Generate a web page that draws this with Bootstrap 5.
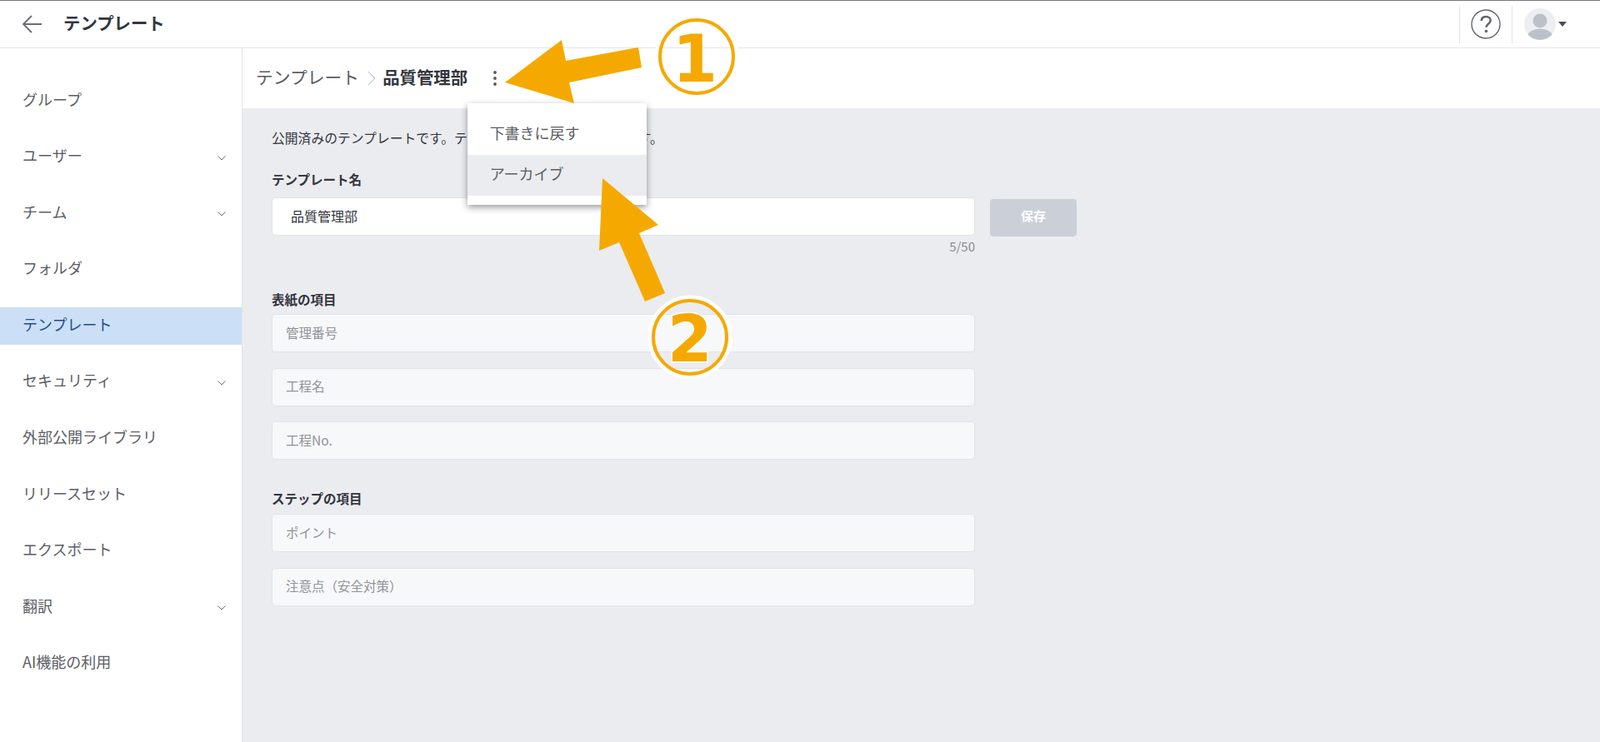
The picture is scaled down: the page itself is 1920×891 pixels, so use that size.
<!DOCTYPE html>
<html lang="ja">
<head>
    <meta charset="UTF-8">
    <title>テンプレート</title>
    <link href="https://cdn.jsdelivr.net/npm/bootstrap@5.3.0/dist/css/bootstrap.min.css" rel="stylesheet">
    <style>
        body {
            height: 891px;
            overflow: hidden;
            position: relative;
            background-color: #ebecf0;
            color: #33363d;
            font-family: "Noto Sans CJK JP", "Noto Sans", sans-serif;
        }

        .top-bar {
            height: 58px;
            background: #fff;
            border-top: 1px solid #77797d;
            border-bottom: 1px solid #e3e4e8;
            padding: 0 0 0 26px;
        }

        .top-title {
            font-size: 20.4px;
            font-weight: 700;
            margin-left: 26px;
            padding-bottom: 3px;
        }

        .top-cell {
            height: 45px;
            border-left: 1px solid #e3e4e8;
        }

        .help-cell { width: 63px; }
        .user-cell { width: 106px; padding-left: 14px; gap: 3px; }

        .side-menu {
            width: 291px;
            height: 833px;
            background: #fff;
            border-right: 1px solid #e3e4e8;
            padding-top: 40.5px;
            gap: 22.6px;
        }

        .side-item {
            height: 45px;
            padding: 0 19px 4px 27px;
            font-size: 18px;
            color: #5a5d64;
        }

        .side-item svg { margin-top: 6px; }

        .side-item.is-current {
            background: #cbe0f6;
            color: #1f4e86;
        }

        .crumb-bar {
            height: 72px;
            background: #fff;
            padding-left: 16px;
            font-size: 20.4px;
        }

        .crumb-link { color: #5a5d64; font-size: 20.8px; padding-bottom: 3px; }
        .crumb-sep { margin: 0 8px 0 10px; }
        .crumb-now { font-weight: 700; padding-bottom: 3px; }
        .kebab-wrap { position: relative; margin-left: 30.5px; height: 18px; }

        .menu-box {
            position: absolute;
            top: 0;
            left: -31px;
            margin-top: 39px !important;
            width: 215px;
            height: 122px;
            padding: 13px 0 11px;
            border: 0;
            border-radius: 0;
            box-shadow: 0 3px 8px rgba(0, 0, 0, .4);
            font-size: 18px;
        }

        .menu-box .dropdown-item {
            height: 49px;
            padding: 0 0 5px 27px;
            display: flex;
            align-items: center;
            color: #5a5d64;
        }

        .menu-box .dropdown-item.is-hover { background: #ebecf0; }

        .form-area { padding: 24px 0 0 35px; width: 1010px; }
        .hint-line { margin: 0 0 25px; line-height: 24px; font-size: 15.8px; white-space: nowrap; }
        .field-label { font-weight: 700; font-size: 15.5px; line-height: 24px; margin-bottom: 6px; display: block; }
        .field-label.name-label { margin-bottom: 10px; }

        .form-control.name-input,
        .form-control.item-input {
            width: 844px;
            height: 46px;
            padding: 0 22px 3px;
            border: 1px solid #e1e3e7;
            border-radius: 4px;
            font-size: 16px;
            color: #33363d;
        }

        .form-control.item-input { background: #f7f8fa; margin-bottom: 18.6px; padding-left: 16px; font-size: 15.5px; }
        .form-control.item-input::placeholder { color: #8f9299; opacity: 1; }
        .form-control.item-input:last-child { margin-bottom: 0; }

        .btn.save-btn:disabled {
            width: 104px;
            height: 45px;
            margin-left: 18px;
            margin-top: 2px;
            padding: 0 0 4px;
            border: 0;
            border-radius: 4px;
            background: #cbcfd8;
            color: #fff;
            opacity: 1;
            font-size: 15px;
            font-weight: 700;
        }

        .count-text { width: 844px; text-align: right; font-size: 15px; line-height: 16px; color: #8a8d93; margin-top: 4px; }
        .group-one { margin-top: 43px; }
        .group-two { margin-top: 34px; }
        .group-two .field-label { margin-bottom: 7px; }

        .mark-layer { position: absolute; left: 0; top: 0; z-index: 1100; pointer-events: none; }
        .mark-num {
            font-family: "DejaVu Sans", sans-serif;
            font-weight: 700;
            font-size: 78px;
            fill: #f5a900;
            stroke: #fff;
            stroke-width: 3px;
            paint-order: stroke;
            text-anchor: middle;
        }
    </style>
</head>

<body>
    <header class="top-bar d-flex align-items-center">
        <svg width="24" height="22" viewBox="0 0 24 22" fill="none" stroke="#6b6e75" stroke-width="1.8"><path d="M24 11H2M12 1 2 11l10 10"/></svg>
        <div class="top-title">テンプレート</div>
        <div class="d-flex ms-auto">
            <div class="top-cell help-cell d-flex align-items-center justify-content-center">
                <svg width="36" height="36" viewBox="0 0 36 36"><circle cx="18" cy="18" r="17" fill="none" stroke="#63666d" stroke-width="1.4"/><path d="M12.7 14c.2-3.2 2.400-5 5.500-5 3.200 0 5.400 1.900 5.400 4.600 0 4-5.200 4.200-5.200 8.200" fill="none" stroke="#63666d" stroke-width="2.600"/><circle cx="18.400" cy="26.500" r="1.800" fill="#63666d"/></svg>
            </div>
            <div class="top-cell user-cell d-flex align-items-center">
                <svg width="38" height="38" viewBox="0 0 38 38"><defs><clipPath id="avatarClip"><circle cx="19" cy="19" r="19"/></clipPath></defs><circle cx="19" cy="19" r="19" fill="#eceef2"/><g clip-path="url(#avatarClip)" fill="#bcc0c8"><circle cx="19" cy="15" r="8.500"/><ellipse cx="19" cy="34" rx="15" ry="9.500"/></g></svg>
                <svg width="10" height="6" viewBox="0 0 10 6"><path d="M0 0h10L5 6z" fill="#4a4d57"/></svg>
            </div>
        </div>
    </header>

    <div class="d-flex">
        <nav class="side-menu nav flex-column flex-nowrap">
            <div class="side-item d-flex align-items-center">グループ</div>
            <div class="side-item d-flex align-items-center justify-content-between">ユーザー<svg width="10" height="6" viewBox="0 0 10 6" fill="none" stroke="#6b6e75"><path d="M.5.500 5 5 9.500.500"/></svg></div>
            <div class="side-item d-flex align-items-center justify-content-between">チーム<svg width="10" height="6" viewBox="0 0 10 6" fill="none" stroke="#6b6e75"><path d="M.5.500 5 5 9.500.500"/></svg></div>
            <div class="side-item d-flex align-items-center">フォルダ</div>
            <div class="side-item is-current d-flex align-items-center">テンプレート</div>
            <div class="side-item d-flex align-items-center justify-content-between">セキュリティ<svg width="10" height="6" viewBox="0 0 10 6" fill="none" stroke="#6b6e75"><path d="M.5.500 5 5 9.500.500"/></svg></div>
            <div class="side-item d-flex align-items-center">外部公開ライブラリ</div>
            <div class="side-item d-flex align-items-center">リリースセット</div>
            <div class="side-item d-flex align-items-center">エクスポート</div>
            <div class="side-item d-flex align-items-center justify-content-between">翻訳<svg width="10" height="6" viewBox="0 0 10 6" fill="none" stroke="#6b6e75"><path d="M.5.500 5 5 9.500.500"/></svg></div>
            <div class="side-item d-flex align-items-center">AI機能の利用</div>
        </nav>

        <main class="flex-grow-1">
            <div class="crumb-bar d-flex align-items-center">
                <span class="crumb-link">テンプレート</span>
                <svg class="crumb-sep" width="10" height="18" viewBox="0 0 10 18" fill="none" stroke="#b5b7bc"><path d="m1 1 8 8-8 8"/></svg>
                <span class="crumb-now">品質管理部</span>
                <div class="kebab-wrap">
                    <svg class="d-block" width="4" height="18" viewBox="0 0 4 18" fill="#55585f"><circle cx="2" cy="2" r="1.900"/><circle cx="2" cy="9" r="1.900"/><circle cx="2" cy="16" r="1.900"/></svg>
                    <div class="dropdown-menu show menu-box">
                        <a class="dropdown-item" href="#">下書きに戻す</a>
                        <a class="dropdown-item is-hover" href="#">アーカイブ</a>
                    </div>
                </div>
            </div>

            <form class="form-area">
                <p class="hint-line">公開済みのテンプレートです。テンプレート名のみ変更できます。</p>
                <label class="field-label name-label">テンプレート名</label>
                <div class="d-flex align-items-start">
                    <input type="text" class="form-control name-input flex-shrink-0" value="品質管理部">
                    <button type="button" class="btn save-btn flex-shrink-0" disabled>保存</button>
                </div>
                <div class="count-text">5/50</div>

                <div class="group-one">
                    <label class="field-label">表紙の項目</label>
                    <input type="text" class="form-control item-input" placeholder="管理番号">
                    <input type="text" class="form-control item-input" placeholder="工程名">
                    <input type="text" class="form-control item-input" placeholder="工程No.">
                </div>

                <div class="group-two">
                    <label class="field-label">ステップの項目</label>
                    <input type="text" class="form-control item-input" placeholder="ポイント">
                    <input type="text" class="form-control item-input" placeholder="注意点（安全対策）">
                </div>
            </form>
        </main>
    </div>

    <!-- annotation arrows and numbers on top of the screenshot -->
    <svg class="mark-layer" width="1920" height="891" viewBox="0 0 1920 891">
        <polygon fill="#f5a900" points="606,99 674,48 679,73 766,57 770,81 683,99 689,124"/>
        <polygon fill="#f5a900" points="723,214 790,270 767,280 798,352 774,362 743,291 719,301"/>
        <circle cx="836" cy="68" r="48" fill="none" stroke="#fff" stroke-width="5"/>
        <circle cx="836" cy="68" r="44" fill="none" stroke="#f5a900" stroke-width="4"/>
        <text class="mark-num" x="834" y="98">1</text>
        <circle cx="828" cy="405" r="48" fill="none" stroke="#fff" stroke-width="5"/>
        <circle cx="828" cy="405" r="44" fill="none" stroke="#f5a900" stroke-width="4"/>
        <text class="mark-num" x="828" y="434">2</text>
    </svg>

    <script src="https://cdn.jsdelivr.net/npm/bootstrap@5.3.0/dist/js/bootstrap.bundle.min.js"></script>
</body>
</html>
